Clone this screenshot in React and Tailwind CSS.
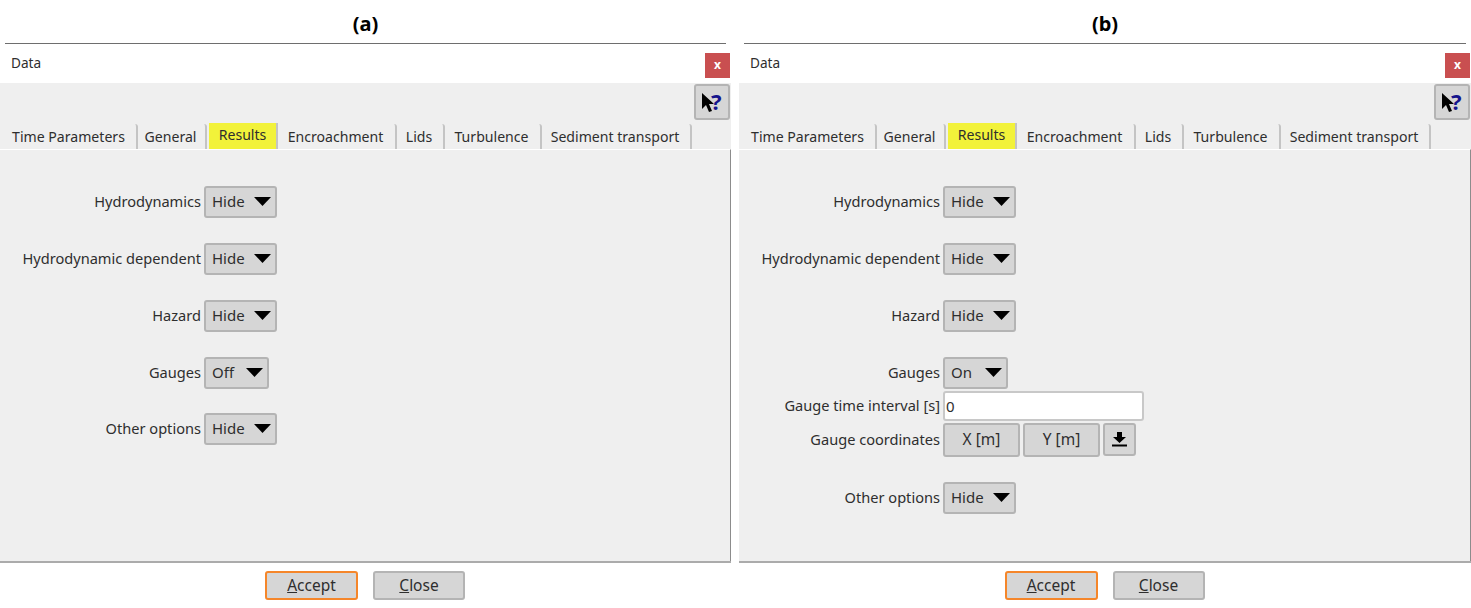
import React from 'react';

const tabs = [
  { text: 'Time Parameters', w: 'w-[135px]' },
  { text: 'General', w: 'w-[69px]' },
  { text: 'Results', w: 'w-[69px] ml-[2px]', active: true },
  { text: 'Encroachment', w: 'w-[119px]' },
  { text: 'Lids', w: 'w-[48px]' },
  { text: 'Turbulence', w: 'w-[97px]' },
  { text: 'Sediment transport', w: 'w-[150px]' },
];

const Label = ({ children }) => (
  <div className="w-[201px] text-right whitespace-nowrap text-[14.6px] leading-[20px] pb-[2px]">{children}</div>
);

const Select = ({ value, w }) => (
  <div className={`${w} h-[32px] flex items-center justify-between pl-[6px] pr-[3px] bg-[#d6d6d6] border-2 border-[#b4b4b4] rounded-[3px] text-[15px]`}>
    <span className="leading-[20px] pb-[2px]">{value}</span>
    <svg width="17" height="9" viewBox="0 0 17 9" className="mb-[2px] mr-[1px]">
      <polygon points="0,0 17,0 8.5,9" fill="#000" />
    </svg>
  </div>
);

const Row = ({ label, value, w = 'w-[73px]', className = 'mt-[25px]' }) => (
  <div className={`flex items-center gap-[3px] ${className}`}>
    <Label>{label}</Label>
    <Select value={value} w={w} />
  </div>
);

const GreyButton = ({ children, w }) => (
  <div className={`${w} h-[34px] flex items-center justify-center bg-[#d6d6d6] border-2 border-[#b4b4b4] rounded-[3px] text-[15.5px]`}>
    {children}
  </div>
);

const Panel = ({ title, gaugesOn, className }) => (
  <div className={`flex flex-col shrink-0 ${className}`}>
    <div className="h-[43px] flex items-center justify-center pt-[5px] font-bold text-[20px] text-black">{title}</div>
    <div className="h-px bg-[#6e6e6e] ml-[5px] mr-[5px]" />

    {/* Header */}
    <div className="h-[39px] flex items-center justify-between pl-[11px] pr-[1px]">
      <span className="text-[13.6px] leading-[20px] pb-[2px]">Data</span>
      <div className="w-[25px] h-[25px] flex items-center justify-center bg-[#c94f50] text-white text-[12px] font-bold mt-[3px]">x</div>
    </div>

    {/* Toolbar */}
    <div className="h-[40px] bg-[#efefef] flex justify-end pt-[1px] pr-[1px]">
      <div className="w-[36px] h-[36px] relative bg-[#d6d6d6] border-2 border-[#b4b4b4] rounded-[3px]">
        <svg width="14" height="20" viewBox="0 0 14 20" className="absolute left-[5px] top-[7px]">
          <polygon points="1,0 13,11 8,11 11,18 8,19 5,12 1,16" fill="#000" />
        </svg>
        <span className="absolute left-[15px] top-[2px] text-[#14148c] text-[22px] leading-[26px] font-bold">?</span>
      </div>
    </div>

    {/* Tabs */}
    <div className="h-[26px] bg-[#efefef] flex pl-[3px] text-[14.1px]">
      {tabs.map((tab) => (
        <div
          key={tab.text}
          className={
            tab.active
              ? `${tab.w} h-[26px] pb-[3px] flex items-center justify-center bg-[#f2f23a] border-r-2 border-[#c4c4c4]`
              : `${tab.w} h-[25px] mt-px pr-[2px] flex items-center justify-center border-r-2 border-[#c4c4c4] rounded-tr-[3px]`
          }
        >
          {tab.text}
        </div>
      ))}
    </div>

    {/* Content */}
    <div className="h-[412px] bg-[#efefef] border-t border-white border-r border-r-[#8c8c8c] pt-[36px]">
      <Row label="Hydrodynamics" value="Hide" className="" />
      <Row label="Hydrodynamic dependent" value="Hide" />
      <Row label="Hazard" value="Hide" />
      <Row label="Gauges" value={gaugesOn ? 'On' : 'Off'} w="w-[65px]" />
      {gaugesOn && (
        <>
          <div className="flex items-center gap-[3px] mt-[2px]">
            <Label>Gauge time interval [s]</Label>
            <div className="w-[201px] h-[30px] flex items-center pl-[1px] bg-white border-2 border-[#c8c8c8] rounded-[3px] text-[15px]">0</div>
          </div>
          <div className="flex items-center gap-[3px] mt-[2px]">
            <Label>Gauge coordinates</Label>
            <div className="flex gap-[3px]">
              <GreyButton w="w-[77px]">X [m]</GreyButton>
              <GreyButton w="w-[77px]">Y [m]</GreyButton>
              <div className="w-[33px] h-[33px] flex items-center justify-center bg-[#d6d6d6] border-2 border-[#b4b4b4] rounded-[3px]">
                <svg width="15" height="15" viewBox="0 0 15 15">
                  <polygon points="5,0 10,0 10,5 14,5 7.5,11 1,5 5,5" fill="#000" />
                  <rect x="0" y="12.5" width="15" height="2" fill="#000" />
                </svg>
              </div>
            </div>
          </div>
        </>
      )}
      <Row label="Other options" value="Hide" className={gaugesOn ? 'mt-[25px]' : 'mt-[24px]'} />
    </div>
    <div className="h-[2px] bg-[#ababab]" />

    {/* Footer */}
    <div className="flex justify-center gap-[15px] pt-[8px] pr-[1px] text-[15.5px]">
      <div className="w-[93px] h-[29px] pt-[1px] flex items-center justify-center bg-[#d6d6d6] border-2 border-[#f5862a] rounded-[3px]">
        <span><span className="underline">A</span>ccept</span>
      </div>
      <div className="w-[92px] h-[29px] pt-[1px] flex items-center justify-center bg-[#d6d6d6] border-2 border-[#b4b4b4] rounded-[3px]">
        <span><span className="underline">C</span>lose</span>
      </div>
    </div>
  </div>
);

const App = () => (
  <div className="w-[1471px] h-[608px] overflow-hidden bg-white flex gap-[8px] text-[14px] text-[#2e2e2e] font-['Noto_Sans',sans-serif]">
    <Panel title="(a)" className="w-[731px]" />
    <Panel title="(b)" className="w-[732px]" gaugesOn />
  </div>
);

export default App;
